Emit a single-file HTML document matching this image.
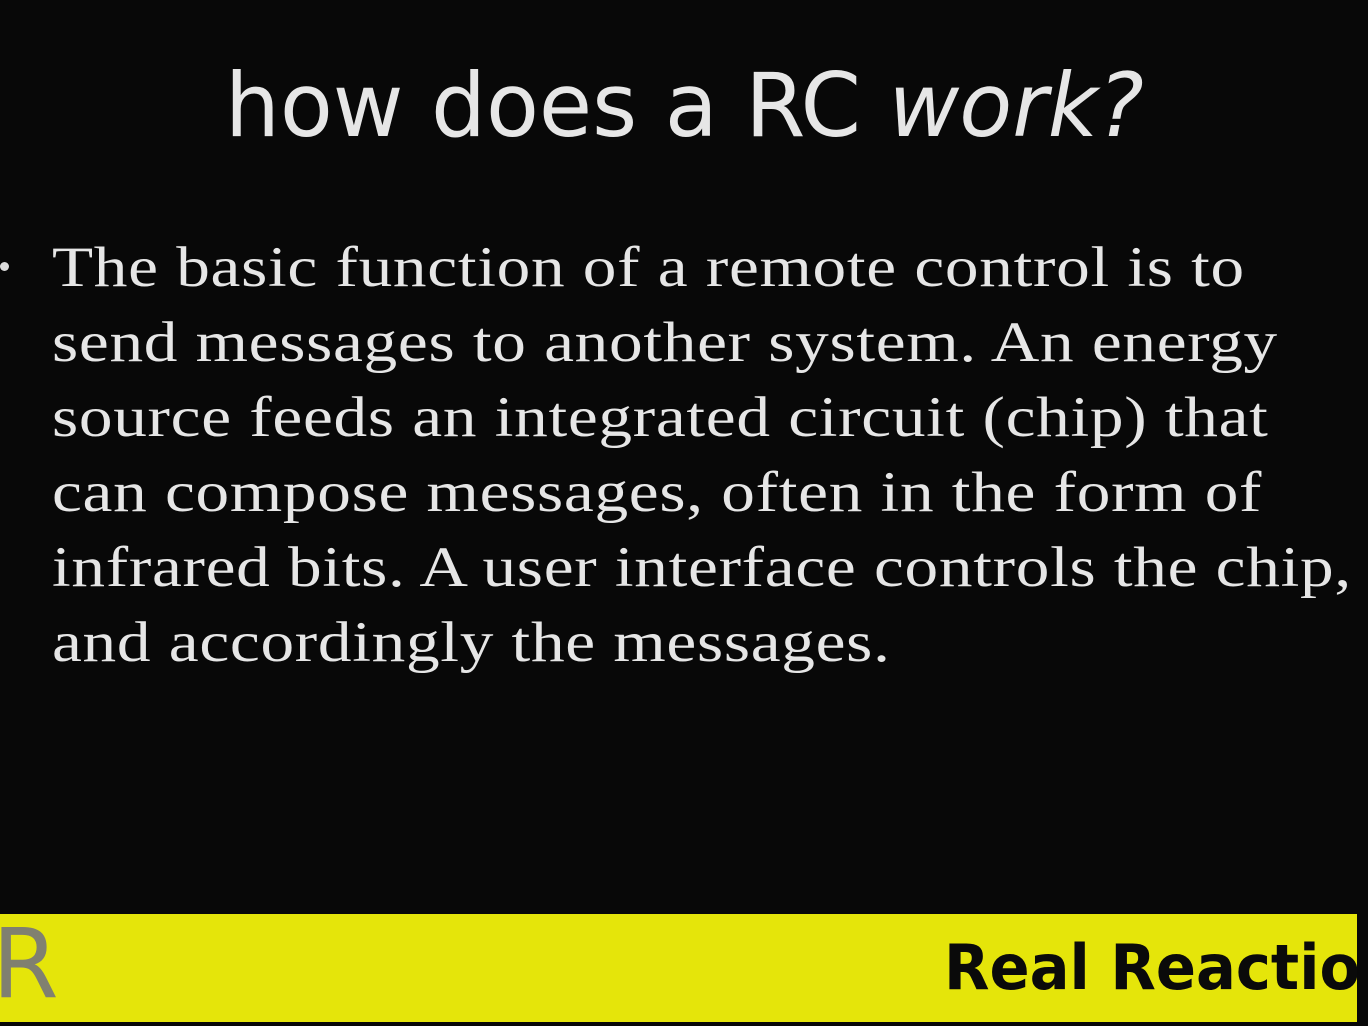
<!DOCTYPE html>
<html><head><style>
html,body{margin:0;padding:0;background:#080808;width:1368px;height:1026px;overflow:hidden;position:relative}
.t{position:absolute;left:225px;top:54px;font-family:"DejaVu Sans Condensed","Liberation Sans",sans-serif;font-size:88px;color:#e6e6e6;white-space:nowrap;transform:scaleX(1.093);transform-origin:0 0}
.b{position:absolute;left:52px;top:230px;font-family:"Liberation Serif",serif;font-size:57px;line-height:75px;color:#e6e6e6;white-space:nowrap;letter-spacing:0.6px;transform:scaleX(1.18);transform-origin:0 0}
.dot{position:absolute;left:0;top:262px;width:9px;height:9px;background:#ddd;border-radius:50%}
.y{position:absolute;left:0;top:914px;width:1357px;height:108px;background:#e5e50a;overflow:hidden}
.r{position:absolute;left:-8px;top:-4px;font-family:"DejaVu Sans","Liberation Sans",sans-serif;font-size:96px;color:#808070;line-height:108px}
.rr{position:absolute;left:944px;top:16px;font-family:"DejaVu Sans Condensed","Liberation Sans",sans-serif;font-weight:bold;font-size:62px;color:#0a0a0a;white-space:nowrap;line-height:76px;transform:scaleX(1.06);transform-origin:0 0}
</style></head><body>
<div class="t">how does a RC <i>work?</i></div>
<div class="dot"></div>
<div class="b">The basic function of a remote control is to<br>send messages to another system. An energy<br>source feeds an integrated circuit (chip) that<br>can compose messages, often in the form of<br>infrared bits. A user interface controls the chip,<br>and accordingly the messages.</div>
<div class="y"><div class="r">R</div><div class="rr">Real Reaction</div></div>
</body></html>
